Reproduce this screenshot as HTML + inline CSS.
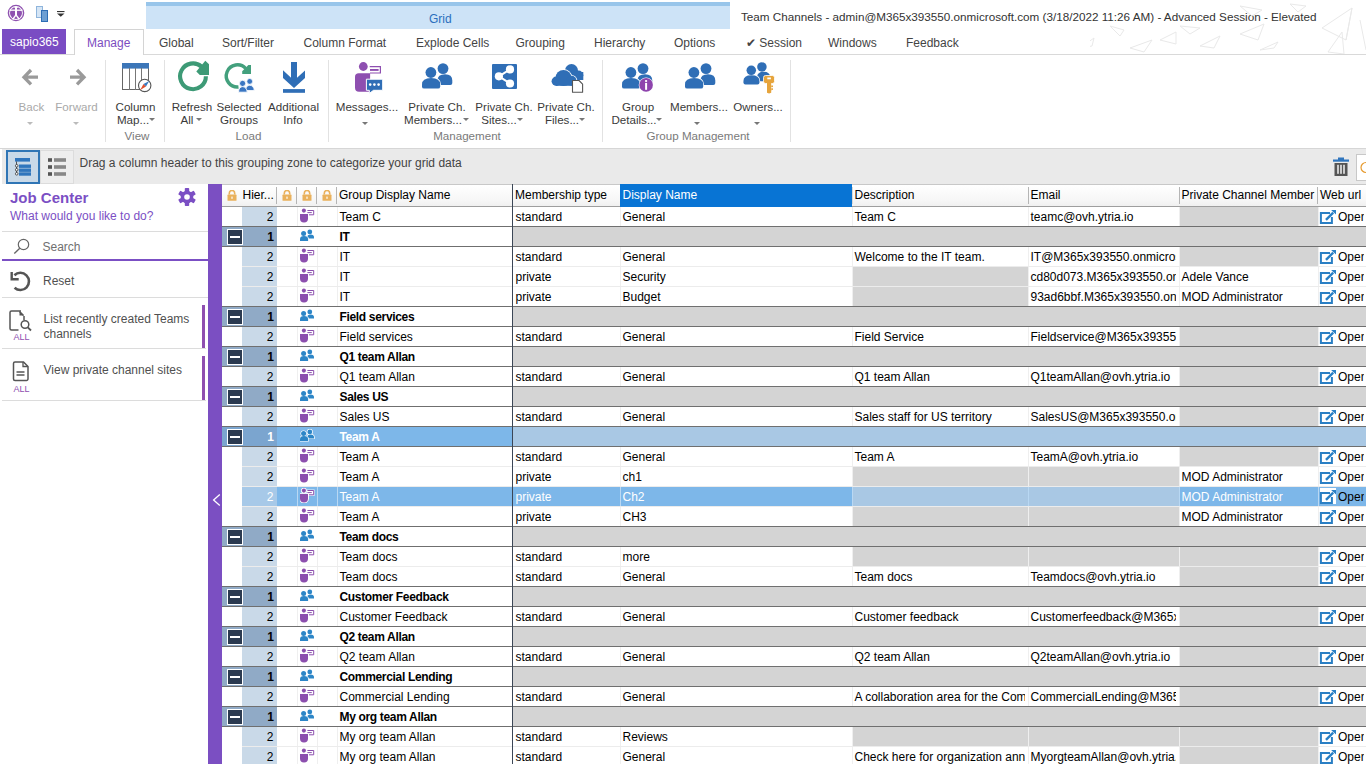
<!DOCTYPE html><html><head><meta charset="utf-8"><style>
*{margin:0;padding:0;box-sizing:border-box}
html,body{width:1366px;height:764px;overflow:hidden;background:#fff;font-family:"Liberation Sans",sans-serif;font-size:12px;color:#222}
.a{position:absolute}
.t{position:absolute;white-space:nowrap;line-height:14px}
.tab{position:absolute;top:36px;white-space:nowrap;color:#444;font-size:12px;line-height:14px}
.rb{position:absolute;white-space:nowrap;color:#3a3a3a;font-size:11.6px;line-height:13px;text-align:center}
.rg{position:absolute;white-space:nowrap;color:#7a7a7a;font-size:11.6px;line-height:13px;text-align:center}
.sep{position:absolute;top:60px;width:1px;height:82px;background:#e2e2e2}
.dd{position:absolute;width:0;height:0;border-left:3px solid transparent;border-right:3px solid transparent;border-top:3px solid #777}
#grid{position:absolute;left:222px;top:184px;width:1144px;height:580px;overflow:hidden}
.row{position:absolute;left:0;width:1144px;height:20px}
.c{position:absolute;top:0;height:20px;line-height:20px;white-space:nowrap;overflow:hidden;padding-left:3px}
</style></head><body><svg width="0" height="0" style="position:absolute">
<defs>
<symbol id="lock" viewBox="0 0 10 11"><path d="M2.3 4.6V3.2a2.7 2.7 0 0 1 5.4 0v1.4" fill="none" stroke="#e9b15c" stroke-width="1.6"/><rect x="0.5" y="4.6" width="9" height="6.2" rx="0.6" fill="#e9b15c"/><rect x="4.4" y="6.6" width="1.2" height="2.2" fill="#fff"/></symbol>
<symbol id="chan" viewBox="0 0 15 15"><circle cx="3.9" cy="2.6" r="2.05" fill="#8c4fae"/><path d="M0 6H8V10.6A4 4 0 0 1 0 10.6Z" fill="#8c4fae"/><path d="M7.4 2.5H13.7V6.8H9M7.4 4.6H11.8" fill="none" stroke="#8c4fae" stroke-width="1"/></symbol>
<symbol id="chansel" viewBox="0 0 15 15"><circle cx="3.9" cy="2.6" r="2.9" fill="#fff"/><path d="M-0.9 5.2H8.9V10.6A4.9 4.9 0 0 1 -0.9 10.6Z" fill="#fff"/><rect x="6.6" y="1.6" width="8" height="6.2" fill="#fff"/><circle cx="3.9" cy="2.6" r="2.05" fill="#8c4fae"/><path d="M0 6H8V10.6A4 4 0 0 1 0 10.6Z" fill="#8c4fae"/><path d="M7.4 2.5H13.7V6.8H9M7.4 4.6H11.8" fill="none" stroke="#8c4fae" stroke-width="1"/></symbol>
<symbol id="team" viewBox="0 0 15 13" overflow="visible"><circle cx="9.8" cy="2.9" r="2.4" fill="#2d86c7"/><path d="M7.2 9.4V8.3Q7.2 5.5 10.6 5.5Q14 5.5 14 8.3V9.4Z" fill="#2d86c7"/><circle cx="3.6" cy="4.6" r="3.1" fill="#fff"/><path d="M-0.7 12.6V10Q-0.7 6.4 4 6.4Q8.8 6.4 8.8 10V12.6Z" fill="#fff"/><circle cx="3.6" cy="4.6" r="2.5" fill="#2d86c7"/><path d="M0 11.9V10.2Q0 7.1 4 7.1Q8.1 7.1 8.1 10.2V11.9Z" fill="#2d86c7"/></symbol>
<symbol id="teamsel" viewBox="0 0 15 13" overflow="visible"><circle cx="9.8" cy="2.9" r="3.1" fill="#fff"/><path d="M6.5 10.1V8.3Q6.5 4.8 10.6 4.8Q14.7 4.8 14.7 8.3V10.1Z" fill="#fff"/><circle cx="9.8" cy="2.9" r="2.4" fill="#2d86c7"/><path d="M7.2 9.4V8.3Q7.2 5.5 10.6 5.5Q14 5.5 14 8.3V9.4Z" fill="#2d86c7"/><circle cx="3.6" cy="4.6" r="3.1" fill="#fff"/><path d="M-0.7 12.6V10Q-0.7 6.4 4 6.4Q8.8 6.4 8.8 10V12.6Z" fill="#fff"/><circle cx="3.6" cy="4.6" r="2.5" fill="#2d86c7"/><path d="M0 11.9V10.2Q0 7.1 4 7.1Q8.1 7.1 8.1 10.2V11.9Z" fill="#2d86c7"/></symbol>
<symbol id="open" viewBox="0 0 17 15"><path d="M11 3.9H1.9V13.9H12.9V8.1" fill="none" stroke="#2a7fc4" stroke-width="2"/><path d="M7 10.8L14.2 3.6" stroke="#2a7fc4" stroke-width="2.4"/><path d="M12.1 1H17V5.6z" fill="#2a7fc4"/></symbol>
</defs></svg>
<svg class="a" style="left:0;top:0" width="1366" height="60">
<circle cx="16" cy="13" r="7.6" fill="none" stroke="#8f52b0" stroke-width="1.4"/>
<circle cx="16" cy="13" r="6" fill="#8f52b0"/>
<path d="M9.5 10.2H22.5" stroke="#fff" stroke-width="1.3"/>
<path d="M16 6.5V15.2" stroke="#fff" stroke-width="2"/>
<path d="M16 14.8L12.6 19.5M16 14.8L19.4 19.5" stroke="#fff" stroke-width="1.4"/>
<path d="M14.3 7L16 8.7 17.7 7" stroke="#fff" stroke-width="1" fill="none"/>
<rect x="36.5" y="6.5" width="6" height="11" fill="#d5e5f5" stroke="#8fb5dc" stroke-width="1"/>
<rect x="41.5" y="10.5" width="6" height="11" fill="#6d9fd3" stroke="#2d6db5" stroke-width="1"/>
<rect x="57" y="11" width="7.5" height="1.1" fill="#333"/>
<path d="M57 13.4h7.5l-3.75 3.4z" fill="#333"/>
</svg>
<div class="a" style="left:146px;top:2px;width:584px;height:27px;background:#cde3f7"></div>
<div class="a" style="left:146px;top:2px;width:584px;height:4px;background:#98c5ea"></div>
<div class="t" style="left:429px;top:12px;color:#2b6fbd;font-size:12px">Grid</div>
<div class="t" style="left:741px;top:10px;color:#333;font-size:11.7px">Team Channels - admin@M365x393550.onmicrosoft.com (3/18/2022 11:26 AM) - Advanced Session - Elevated</div>
<svg class="a" style="left:1090px;top:0" width="276" height="54" fill="none" stroke="#e9e9e9" stroke-width="1">
<path d="M-150 44l14-5-4 9zM-120 38l16-5-6 11z"/>
<path d="M-80 46l18-6-6 12zM-40 42l12-8 4 10zM-10 48l14-10-2 8z"/>
<path d="M40 48l22-8-8 12zM70 40l16-8 0 12zM110 46l20-10-6 12z"/>
<path d="M20 26l14 4-4 6zM90 26l20 2-10 6z"/>
<path d="M150 34l24-10-6 16zM170 50l18-8-4 6z"/>
<path d="M232 28l30-20-6 32zM262 8l-6 32M238 52l14-20 2 22zM270 20l6 30"/>
<path d="M150 6l22 4-10 6zM200 4l16 2-8 6z"/>
</svg>
<div class="a" style="left:2px;top:29px;width:64px;height:25px;background:#7a4cc3"></div>
<div class="t" style="left:10px;top:35px;color:#fff;font-size:12px">sapio365</div>
<div class="a" style="left:0;top:54px;width:1366px;height:1px;background:#d9d9d9"></div>
<div class="a" style="left:74px;top:29px;width:70px;height:26px;background:#fff;border:1px solid #d4d4d4;border-bottom:none"></div>
<div class="t" style="left:87px;top:36px;color:#7c4cc0;font-size:12px">Manage</div>
<div class="tab" style="left:159px">Global</div>
<div class="tab" style="left:222px">Sort/Filter</div>
<div class="tab" style="left:303.5px">Column Format</div>
<div class="tab" style="left:416px">Explode Cells</div>
<div class="tab" style="left:515.5px">Grouping</div>
<div class="tab" style="left:594px">Hierarchy</div>
<div class="tab" style="left:674px">Options</div>
<div class="tab" style="left:746px">&#10004; Session</div>
<div class="tab" style="left:828px">Windows</div>
<div class="tab" style="left:906px">Feedback</div>
<div class="sep" style="left:105px"></div>
<div class="sep" style="left:164px"></div>
<div class="sep" style="left:328px"></div>
<div class="sep" style="left:602px"></div>
<div class="sep" style="left:790px"></div>
<div class="a" style="left:0;top:148px;width:1366px;height:1px;background:#d6d6d6"></div>
<div class="rb gry" style="left:-23.5px;top:100px;width:110px">Back</div>
<style>.gry{color:#a9a9a9 !important}</style>
<div class="rb gry" style="left:21.5px;top:100px;width:110px">Forward</div>
<div class="dd" style="left:27px;top:122px;border-top-color:#bbb"></div>
<div class="dd" style="left:73px;top:122px;border-top-color:#bbb"></div>
<div class="rb" style="left:80.5px;top:100px;width:110px">Column</div>
<div class="rb" style="left:78.0px;top:113px;width:110px">Map...</div>
<div class="dd" style="left:149px;top:118px;border-top-color:#777"></div>
<div class="rg" style="left:82.0px;top:129px;width:110px">View</div>
<div class="rb" style="left:137.0px;top:100px;width:110px">Refresh</div>
<div class="rb" style="left:132.0px;top:113px;width:110px">All</div>
<div class="dd" style="left:196px;top:118px;border-top-color:#777"></div>
<div class="rb" style="left:184.0px;top:100px;width:110px">Selected</div>
<div class="rb" style="left:184.0px;top:113px;width:110px">Groups</div>
<div class="rb" style="left:238.5px;top:100px;width:110px">Additional</div>
<div class="rb" style="left:238.0px;top:113px;width:110px">Info</div>
<div class="rg" style="left:193.5px;top:129px;width:110px">Load</div>
<div class="rb" style="left:312.0px;top:100px;width:110px">Messages...</div>
<div class="dd" style="left:362px;top:122px;border-top-color:#777"></div>
<div class="rb" style="left:382.0px;top:100px;width:110px">Private Ch.</div>
<div class="rb" style="left:378.0px;top:113px;width:110px">Members...</div>
<div class="dd" style="left:463px;top:118px;border-top-color:#777"></div>
<div class="rb" style="left:449.0px;top:100px;width:110px">Private Ch.</div>
<div class="rb" style="left:444.0px;top:113px;width:110px">Sites...</div>
<div class="dd" style="left:517px;top:118px;border-top-color:#777"></div>
<div class="rb" style="left:511.0px;top:100px;width:110px">Private Ch.</div>
<div class="rb" style="left:507.0px;top:113px;width:110px">Files...</div>
<div class="dd" style="left:579px;top:118px;border-top-color:#777"></div>
<div class="rg" style="left:412.0px;top:129px;width:110px">Management</div>
<div class="rb" style="left:583.0px;top:100px;width:110px">Group</div>
<div class="rb" style="left:579.0px;top:113px;width:110px">Details...</div>
<div class="dd" style="left:656px;top:118px;border-top-color:#777"></div>
<div class="rb" style="left:644.0px;top:100px;width:110px">Members...</div>
<div class="dd" style="left:694px;top:122px;border-top-color:#777"></div>
<div class="rb" style="left:703.0px;top:100px;width:110px">Owners...</div>
<div class="dd" style="left:754px;top:122px;border-top-color:#777"></div>
<div class="rg" style="left:628.0px;top:129px;width:140px">Group Management</div>
<svg class="a" style="left:0;top:55px" width="800" height="45" viewBox="0 55 800 45">
<!-- back / forward -->
<path d="M38 77.2H25M31 70L24 77.2l7 7.2" fill="none" stroke="#9a9a9a" stroke-width="3.3"/>
<path d="M70 77.2h13M77 70l7 7.2-7 7.2" fill="none" stroke="#9a9a9a" stroke-width="3.3"/>
<!-- column map -->
<rect x="122.5" y="63.5" width="26" height="26" fill="#fff" stroke="#666" stroke-width="1"/>
<rect x="122" y="63" width="27" height="5.6" fill="#3c76b8"/>
<path d="M129.5 68v22M135.5 68v22M141.5 68v12" stroke="#777" stroke-width="1"/>
<circle cx="144.7" cy="85.4" r="6.2" fill="#fff" stroke="#555" stroke-width="1.1"/>
<path d="M140.2 89.9l3.3-5.8 2.5 2.5z" fill="#e0502e"/><path d="M149.2 80.9l-3.2 5.7-2.5-2.5z" fill="#3b7ac0"/>
<!-- refresh all -->
<path d="M205.9 76.3A12.9 12.9 0 1 1 201.5 66.6" fill="none" stroke="#3d9a76" stroke-width="4.1"/>
<path d="M205.3 60.8L209 64.3V74.9H199.8L196.3 71.5z" fill="#3d9a76"/>
<!-- selected groups -->
<path d="M245.8 68.7A11.1 11.1 0 1 0 238.5 87" fill="none" stroke="#43a07d" stroke-width="3.4"/>
<path d="M248.4 65.1H251V73.9H242.2V71.3z" fill="#43a07d"/>
<circle cx="249.7" cy="81.4" r="2.9" fill="#3a76c2" stroke="#fff" stroke-width="0.8"/>
<path d="M245.5 90.5c0-3.2 1.8-5.2 4.2-5.2s4.5 2 4.5 5.2z" fill="#3a76c2" stroke="#fff" stroke-width="0.8"/>
<circle cx="242.6" cy="83.4" r="3.1" fill="#3a76c2" stroke="#fff" stroke-width="0.9"/>
<path d="M238.5 92.2c0-3.5 1.9-5.6 4.1-5.6s4.6 2.1 4.6 5.6z" fill="#3a76c2" stroke="#fff" stroke-width="0.9"/>
<!-- additional info -->
<rect x="291" y="62" width="6" height="22" fill="#2f6eb6"/>
<path d="M283 70.2L294 80.6L305 70.6V78L294 88L283 78z" fill="#2f6eb6"/>
<rect x="283" y="89.1" width="22" height="3.7" fill="#2f6eb6"/>
<!-- messages -->
<circle cx="363.3" cy="66.5" r="4.4" fill="#8e4fb0"/>
<path d="M355 77Q355 73.3 358.7 73.3H370.1V91.8H359Q355 91.8 355 87.8Z" fill="#8e4fb0"/>
<path d="M369.7 66.7H380.4V73H370" fill="none" stroke="#8e4fb0" stroke-width="1.2"/>
<rect x="370" y="69" width="8.6" height="1.9" fill="#8e4fb0"/>
<path d="M366.4 79.2H382.7V90.3H373.5L369.3 93.5V90.3H366.4Z" fill="#2f6eb6" stroke="#fff" stroke-width="1"/>
<circle cx="370.2" cy="84.6" r="1.3" fill="#fff"/><circle cx="374.4" cy="84.6" r="1.3" fill="#fff"/><circle cx="378.6" cy="84.6" r="1.3" fill="#fff"/>
<!-- private ch members -->
<g id="ppl2">
<circle cx="443" cy="68.6" r="5.4" fill="#2f6eb6"/>
<path d="M437.5 83V80.5Q437.5 74.2 445 74.2Q452.3 74.2 452.3 80.5V83Q452.3 85 450.3 85H439.5Q437.5 85 437.5 83Z" fill="#2f6eb6"/>
<circle cx="430.9" cy="72.5" r="6.2" fill="#fff"/>
<path d="M421.2 86.6V84.6Q421.2 77.3 431.1 77.3Q441 77.3 441 84.6V86.6Q441 89.4 438.2 89.4H424Q421.2 89.4 421.2 86.6Z" fill="#fff"/>
<circle cx="430.9" cy="72.5" r="5.4" fill="#2f6eb6"/>
<path d="M422 86.4V84.6Q422 78.1 431.1 78.1Q440.2 78.1 440.2 84.6V86.4Q440.2 88.6 438 88.6H424.2Q422 88.6 422 86.4Z" fill="#2f6eb6"/>
</g>
<!-- sites -->
<rect x="492" y="64" width="25" height="25" rx="1" fill="#2f6eb6"/>
<path d="M499 76.3l11-6.9M499 76.3l11 7.2" stroke="#fff" stroke-width="2"/>
<circle cx="498.9" cy="76.3" r="4.1" fill="#fff"/><circle cx="510" cy="69.4" r="4.1" fill="#fff"/><circle cx="510" cy="83.5" r="4.1" fill="#fff"/>
<!-- files cloud -->
<g fill="#2f6eb6">
<circle cx="571.5" cy="70.5" r="6.5"/><circle cx="578.5" cy="75.3" r="4.8"/><rect x="566" y="72" width="17.3" height="8"/>
</g>
<g fill="#fff"><circle cx="563.5" cy="78" r="8.9"/><circle cx="556.3" cy="81.3" r="5.6"/><circle cx="571.5" cy="80.8" r="5.9"/></g>
<g fill="#2f6eb6">
<circle cx="563.5" cy="78" r="8"/><circle cx="556.3" cy="81.2" r="4.7"/><circle cx="571.5" cy="80.8" r="5"/><rect x="556" y="80" width="20" height="5.8"/>
</g>
<path d="M572.5 80.5h6.5l3.6 3.6v8.1h-10.1z" fill="#fff" stroke="#555" stroke-width="1.1" stroke-linejoin="round"/>
<!-- group details -->
<use href="#ppl2" transform="translate(200,0)"/>
<circle cx="646.1" cy="84.9" r="7.4" fill="#fff"/><circle cx="646.1" cy="84.9" r="6.8" fill="#8e44ad"/>
<rect x="645.1" y="82.9" width="2" height="6.9" fill="#fff"/><rect x="645.1" y="80.1" width="2" height="1.8" fill="#fff"/>
<!-- members -->
<use href="#ppl2" transform="translate(263,0)"/>
<!-- owners -->
<g transform="translate(743,62) scale(0.88) translate(-421.5,-63)"><use href="#ppl2"/></g>
<rect x="763.5" y="75.5" width="11" height="8" rx="2" fill="#e6a43c" stroke="#fff" stroke-width="0.8"/>
<rect x="767" y="82" width="4.2" height="9" fill="#e6a43c"/>
<path d="M767 92.8l2.1 0.6 2.1-0.6V90h-4.2z" fill="#e6a43c"/>
<rect x="771.2" y="85.5" width="1.8" height="1.6" fill="#e6a43c"/><rect x="771.2" y="88.3" width="1.8" height="1.6" fill="#e6a43c"/>
<rect x="767.3" y="77.5" width="3.6" height="1.8" fill="#fff"/>
</svg>
<div class="a" style="left:2px;top:149px;width:1364px;height:35px;background:#eaeaea"></div>
<div class="a" style="left:6px;top:150px;width:34px;height:34px;background:#c9d9e8;border:2px solid #2f75b5"></div>
<div class="a" style="left:40px;top:150px;width:34px;height:34px;background:#eeeeee;border:1px solid #dcdcdc"></div>
<svg class="a" style="left:0;top:145px" width="80" height="40" viewBox="0 145 80 40">
<rect x="15" y="158" width="15" height="3.6" fill="#2f75bd"/>
<rect x="19" y="164.5" width="12" height="3.4" fill="#2f75bd"/>
<rect x="19" y="168.5" width="12" height="3.4" fill="#2f75bd"/>
<rect x="19" y="172.3" width="12" height="3.4" fill="#2f75bd"/>
<path d="M16.5 161.5v12" stroke="#333" stroke-width="0.8"/>
<circle cx="16.7" cy="165.8" r="1.3" fill="#fff" stroke="#333" stroke-width="0.8"/>
<circle cx="16.7" cy="169.8" r="1.3" fill="#fff" stroke="#333" stroke-width="0.8"/>
<circle cx="16.7" cy="173.8" r="1.3" fill="#fff" stroke="#333" stroke-width="0.8"/>
<rect x="48" y="158.2" width="4" height="3.6" fill="#555"/><rect x="54" y="158.2" width="12" height="3.6" fill="#888"/>
<rect x="48" y="165.2" width="4" height="3.6" fill="#555"/><rect x="54" y="165.2" width="12" height="3.6" fill="#888"/>
<rect x="48" y="172.2" width="4" height="3.6" fill="#555"/><rect x="54" y="172.2" width="12" height="3.6" fill="#888"/>
</svg>
<div class="t" style="left:79.5px;top:156px;color:#444;font-size:12px">Drag a column header to this grouping zone to categorize your grid data</div>
<svg class="a" style="left:1330px;top:150px" width="36" height="34" viewBox="1330 150 36 34">
<rect x="1333" y="159.5" width="16" height="2.2" fill="#2f75bd"/>
<rect x="1338" y="157.5" width="6" height="2.5" fill="#2f75bd"/>
<path d="M1334.5 163h13v13h-13z" fill="#555"/>
<rect x="1337.2" y="164.8" width="1.6" height="9" fill="#eaeaea"/><rect x="1340.2" y="164.8" width="1.6" height="9" fill="#eaeaea"/><rect x="1343.2" y="164.8" width="1.6" height="9" fill="#eaeaea"/>
<rect x="1356.5" y="154.5" width="12" height="26" fill="#fff" stroke="#c8c8c8"/>
<circle cx="1366" cy="167.5" r="5" fill="none" stroke="#e69a2e" stroke-width="1.2"/>
</svg>
<div class="t" style="left:10px;top:189px;color:#7b4fc4;font-size:15px;font-weight:bold;line-height:17px">Job Center</div>
<svg class="a" style="left:177px;top:187px" width="20" height="20" viewBox="0 0 20 20">
<g fill="#7b4fc4" transform="translate(10,10)">
<circle r="6.3"/>
<rect x="-2.2" y="-9" width="4.4" height="18" rx="0.8"/>
<rect x="-2.2" y="-9" width="4.4" height="18" rx="0.8" transform="rotate(60)"/>
<rect x="-2.2" y="-9" width="4.4" height="18" rx="0.8" transform="rotate(120)"/>
</g><circle cx="10" cy="10" r="2.8" fill="#fff"/></svg>
<div class="t" style="left:10px;top:209px;color:#7b4fc4;font-size:12px">What would you like to do?</div>
<div class="a" style="left:2px;top:231px;width:206px;height:1px;background:#dcdcdc"></div>
<svg class="a" style="left:10px;top:236px" width="24" height="20" viewBox="10 236 24 20">
<circle cx="23.5" cy="244.5" r="5.2" fill="none" stroke="#666" stroke-width="1.2"/>
<path d="M19.8 248.3L14.3 253.5" stroke="#666" stroke-width="1.4"/></svg>
<div class="t" style="left:42.5px;top:240px;color:#707070;font-size:12px">Search</div>
<div class="a" style="left:2px;top:259px;width:206px;height:1.5px;background:#7b4fc4"></div>
<svg class="a" style="left:8px;top:268px" width="26" height="26" viewBox="8 268 26 26">
<path d="M14.4 275.2A8.6 8.6 0 1 1 14.6 287.8" fill="none" stroke="#555" stroke-width="2.6"/>
<path d="M11.7 272V279.3H18.7" fill="none" stroke="#555" stroke-width="2.4"/></svg>
<div class="t" style="left:43px;top:273.5px;color:#505050;font-size:12px">Reset</div>
<div class="a" style="left:2px;top:297px;width:206px;height:1px;background:#dcdcdc"></div>
<div class="a" style="left:202px;top:305px;width:3px;height:43px;background:#8e4fb0"></div>
<div class="a" style="left:2px;top:348px;width:204px;height:1px;background:#dcdcdc"></div>
<div class="a" style="left:202px;top:356px;width:3px;height:44px;background:#8e4fb0"></div>
<div class="a" style="left:2px;top:400px;width:204px;height:1px;background:#dcdcdc"></div>
<div class="t" style="left:43.5px;top:312px;color:#505050;font-size:12px;line-height:15px">List recently created Teams<br>channels</div>
<div class="t" style="left:43.5px;top:363px;color:#505050;font-size:12px">View private channel sites</div>
<div class="t" style="left:13.5px;top:332px;color:#8e4fb0;font-size:9px;line-height:11px">ALL</div>
<div class="t" style="left:13.5px;top:384px;color:#8e4fb0;font-size:9px;line-height:11px">ALL</div>
<svg class="a" style="left:0;top:300px" width="40" height="90" viewBox="0 300 40 90">
<path d="M21 311H11.5a1.5 1.5 0 0 0-1.5 1.5v16a1.5 1.5 0 0 0 1.5 1.5h7" fill="none" stroke="#555" stroke-width="1.5"/>
<path d="M19.5 311.5l4 4" stroke="#555" stroke-width="1.5"/><path d="M19.5 311v4.5h4.5z" fill="#555"/>
<path d="M24 316v4" stroke="#555" stroke-width="1.5"/>
<circle cx="25" cy="324.5" r="3.8" fill="none" stroke="#555" stroke-width="1.5"/>
<path d="M27.8 327.3L31 330.5" stroke="#555" stroke-width="1.8"/>
<path d="M23.5 362H15a1.5 1.5 0 0 0-1.5 1.5v15.5a1.5 1.5 0 0 0 1.5 1.5h11.5a1.5 1.5 0 0 0 1.5-1.5V366.5z" fill="none" stroke="#555" stroke-width="1.5"/>
<path d="M23 362v4.5h5" fill="none" stroke="#555" stroke-width="1.3"/>
<path d="M16.5 372h8M16.5 375h8" stroke="#555" stroke-width="1.5"/>
</svg>
<div class="a" style="left:208px;top:184px;width:14px;height:580px;background:#7b4fc2"></div>
<svg class="a" style="left:208px;top:490px" width="14" height="20" viewBox="0 0 14 20"><path d="M11.8 4.5l-6.2 5.5 6.2 5.5" fill="none" stroke="#fff" stroke-width="1.3"/></svg>
<div id="grid">
<div class="a" style="left:0;top:0;width:1144px;height:23px;background:linear-gradient(#ffffff,#f7f7f7 70%,#f0f0f0);border-top:1px solid #c8c8c8;border-bottom:1px solid #9e9e9e"></div>
<div class="a" style="left:54px;top:3px;width:1px;height:17px;background:#b5b5b5"></div>
<div class="a" style="left:74px;top:3px;width:1px;height:17px;background:#b5b5b5"></div>
<div class="a" style="left:94px;top:3px;width:1px;height:17px;background:#b5b5b5"></div>
<div class="a" style="left:114px;top:3px;width:1px;height:17px;background:#b5b5b5"></div>
<div class="a" style="left:806px;top:3px;width:1px;height:17px;background:#b5b5b5"></div>
<div class="a" style="left:957px;top:3px;width:1px;height:17px;background:#b5b5b5"></div>
<div class="a" style="left:1095px;top:3px;width:1px;height:17px;background:#b5b5b5"></div>
<div class="a" style="left:630px;top:3px;width:1px;height:17px;background:#d8d8d8"></div>
<svg class="a" style="left:4.5px;top:5.5px" width="10" height="11"><use href="#lock"/></svg>
<svg class="a" style="left:60px;top:5.5px" width="10" height="11"><use href="#lock"/></svg>
<svg class="a" style="left:80px;top:5.5px" width="10" height="11"><use href="#lock"/></svg>
<svg class="a" style="left:100px;top:5.5px" width="10" height="11"><use href="#lock"/></svg>
<div class="a" style="left:398px;top:0px;width:232px;height:23px;background:#0874d4"></div>
<div class="t" style="left:20.5px;top:4px;color:#000">Hier...</div>
<div class="t" style="left:117px;top:4px;color:#000">Group Display Name</div>
<div class="t" style="left:293px;top:4px;color:#000">Membership type</div>
<div class="t" style="left:400.5px;top:4px;color:#fff">Display Name</div>
<div class="t" style="left:632.5px;top:4px;color:#000">Description</div>
<div class="t" style="left:808.5px;top:4px;color:#000">Email</div>
<div class="t" style="left:959.5px;top:4px;color:#000">Private Channel Member</div>
<div class="t" style="left:1098px;top:4px;color:#000">Web url</div>
<div class="a" style="left:20px;top:23px;width:1124px;height:20px;background:#fff"></div>
<div class="a" style="left:20px;top:23px;width:35px;height:20px;background:#c9d9e8"></div>
<div class="c" style="left:20px;top:23px;width:35px;color:#000;text-align:right;padding-left:0;padding-right:3.5px;">2</div>
<svg class="a" style="left:78px;top:24px;overflow:visible" width="15" height="15"><use href="#chan"/></svg>
<div class="c" style="left:115px;top:23px;width:172px;color:#000;padding-left:2.5px;">Team C</div>
<div class="c" style="left:291px;top:23px;width:104px;color:#000;padding-left:2.5px;">standard</div>
<div class="c" style="left:398px;top:23px;width:229px;color:#000;padding-left:2.5px;">General</div>
<div class="c" style="left:630px;top:23px;width:173px;color:#000;padding-left:2.5px;">Team C</div>
<div class="c" style="left:806px;top:23px;width:148px;color:#000;padding-left:2.5px;">teamc@ovh.ytria.io</div>
<div class="a" style="left:958px;top:23px;width:138px;height:19px;background:#d4d4d4"></div>
<svg class="a" style="left:1097px;top:25px" width="17" height="15"><use href="#open"/></svg>
<div class="c" style="left:1116px;top:23px;width:26px;color:#000;padding-left:0">Open</div>
<div class="a" style="left:20px;top:42px;width:1124px;height:1px;background:#ececec"></div>
<div class="a" style="left:75px;top:23px;width:1px;height:19px;background:#efefef"></div>
<div class="a" style="left:95px;top:23px;width:1px;height:19px;background:#efefef"></div>
<div class="a" style="left:115px;top:23px;width:1px;height:19px;background:#efefef"></div>
<div class="a" style="left:398px;top:23px;width:1px;height:19px;background:#efefef"></div>
<div class="a" style="left:630px;top:23px;width:1px;height:19px;background:#efefef"></div>
<div class="a" style="left:806px;top:23px;width:1px;height:19px;background:#efefef"></div>
<div class="a" style="left:957px;top:23px;width:1px;height:19px;background:#efefef"></div>
<div class="a" style="left:1096px;top:23px;width:1px;height:19px;background:#efefef"></div>
<div class="a" style="left:0;top:43px;width:1144px;height:20px;background:#ffffff"></div>
<div class="a" style="left:291px;top:43px;width:853px;height:20px;background:#d4d4d4"></div>
<div class="a" style="left:0;top:43px;width:55px;height:20px;background:#90aac6"></div>
<div class="a" style="left:5px;top:45px;width:16px;height:16px;background:#2b3a50;border:1px solid #fff"></div>
<div class="a" style="left:8px;top:52px;width:10px;height:2.4px;background:#fff"></div>
<div class="c" style="left:20px;top:43px;width:35px;color:#000;font-weight:bold;letter-spacing:-0.33px;text-align:right;padding-left:0;padding-right:3.5px;">1</div>
<svg class="a" style="left:78px;top:45px" width="15" height="13" style="overflow:visible"><use href="#team"/></svg>
<div class="c" style="left:115px;top:43px;width:172px;color:#000;font-weight:bold;letter-spacing:-0.33px;padding-left:2.5px;">IT</div>
<div class="a" style="left:0;top:42px;width:1144px;height:1px;background:#6f6f6f"></div>
<div class="a" style="left:0;top:62px;width:1144px;height:1px;background:#6f6f6f"></div>
<div class="a" style="left:20px;top:63px;width:1124px;height:20px;background:#fff"></div>
<div class="a" style="left:20px;top:63px;width:35px;height:20px;background:#c9d9e8"></div>
<div class="c" style="left:20px;top:63px;width:35px;color:#000;text-align:right;padding-left:0;padding-right:3.5px;">2</div>
<svg class="a" style="left:78px;top:64px;overflow:visible" width="15" height="15"><use href="#chan"/></svg>
<div class="c" style="left:115px;top:63px;width:172px;color:#000;padding-left:2.5px;">IT</div>
<div class="c" style="left:291px;top:63px;width:104px;color:#000;padding-left:2.5px;">standard</div>
<div class="c" style="left:398px;top:63px;width:229px;color:#000;padding-left:2.5px;">General</div>
<div class="c" style="left:630px;top:63px;width:173px;color:#000;padding-left:2.5px;">Welcome to the IT team.</div>
<div class="c" style="left:806px;top:63px;width:148px;color:#000;padding-left:2.5px;">IT@M365x393550.onmicrosoft.com</div>
<div class="a" style="left:958px;top:63px;width:138px;height:19px;background:#d4d4d4"></div>
<svg class="a" style="left:1097px;top:65px" width="17" height="15"><use href="#open"/></svg>
<div class="c" style="left:1116px;top:63px;width:26px;color:#000;padding-left:0">Open</div>
<div class="a" style="left:20px;top:82px;width:1124px;height:1px;background:#ececec"></div>
<div class="a" style="left:75px;top:63px;width:1px;height:19px;background:#efefef"></div>
<div class="a" style="left:95px;top:63px;width:1px;height:19px;background:#efefef"></div>
<div class="a" style="left:115px;top:63px;width:1px;height:19px;background:#efefef"></div>
<div class="a" style="left:398px;top:63px;width:1px;height:19px;background:#efefef"></div>
<div class="a" style="left:630px;top:63px;width:1px;height:19px;background:#efefef"></div>
<div class="a" style="left:806px;top:63px;width:1px;height:19px;background:#efefef"></div>
<div class="a" style="left:957px;top:63px;width:1px;height:19px;background:#efefef"></div>
<div class="a" style="left:1096px;top:63px;width:1px;height:19px;background:#efefef"></div>
<div class="a" style="left:20px;top:83px;width:1124px;height:20px;background:#fff"></div>
<div class="a" style="left:20px;top:83px;width:35px;height:20px;background:#c9d9e8"></div>
<div class="c" style="left:20px;top:83px;width:35px;color:#000;text-align:right;padding-left:0;padding-right:3.5px;">2</div>
<svg class="a" style="left:78px;top:84px;overflow:visible" width="15" height="15"><use href="#chan"/></svg>
<div class="c" style="left:115px;top:83px;width:172px;color:#000;padding-left:2.5px;">IT</div>
<div class="c" style="left:291px;top:83px;width:104px;color:#000;padding-left:2.5px;">private</div>
<div class="c" style="left:398px;top:83px;width:229px;color:#000;padding-left:2.5px;">Security</div>
<div class="a" style="left:631px;top:83px;width:175px;height:19px;background:#d4d4d4"></div>
<div class="c" style="left:806px;top:83px;width:148px;color:#000;padding-left:2.5px;">cd80d073.M365x393550.onmicrosoft.com</div>
<div class="c" style="left:957px;top:83px;width:136px;color:#000;padding-left:2.5px;">Adele Vance</div>
<svg class="a" style="left:1097px;top:85px" width="17" height="15"><use href="#open"/></svg>
<div class="c" style="left:1116px;top:83px;width:26px;color:#000;padding-left:0">Open</div>
<div class="a" style="left:20px;top:102px;width:1124px;height:1px;background:#ececec"></div>
<div class="a" style="left:75px;top:83px;width:1px;height:19px;background:#efefef"></div>
<div class="a" style="left:95px;top:83px;width:1px;height:19px;background:#efefef"></div>
<div class="a" style="left:115px;top:83px;width:1px;height:19px;background:#efefef"></div>
<div class="a" style="left:398px;top:83px;width:1px;height:19px;background:#efefef"></div>
<div class="a" style="left:630px;top:83px;width:1px;height:19px;background:#efefef"></div>
<div class="a" style="left:806px;top:83px;width:1px;height:19px;background:#efefef"></div>
<div class="a" style="left:957px;top:83px;width:1px;height:19px;background:#efefef"></div>
<div class="a" style="left:1096px;top:83px;width:1px;height:19px;background:#efefef"></div>
<div class="a" style="left:20px;top:103px;width:1124px;height:20px;background:#fff"></div>
<div class="a" style="left:20px;top:103px;width:35px;height:20px;background:#c9d9e8"></div>
<div class="c" style="left:20px;top:103px;width:35px;color:#000;text-align:right;padding-left:0;padding-right:3.5px;">2</div>
<svg class="a" style="left:78px;top:104px;overflow:visible" width="15" height="15"><use href="#chan"/></svg>
<div class="c" style="left:115px;top:103px;width:172px;color:#000;padding-left:2.5px;">IT</div>
<div class="c" style="left:291px;top:103px;width:104px;color:#000;padding-left:2.5px;">private</div>
<div class="c" style="left:398px;top:103px;width:229px;color:#000;padding-left:2.5px;">Budget</div>
<div class="a" style="left:631px;top:103px;width:175px;height:19px;background:#d4d4d4"></div>
<div class="c" style="left:806px;top:103px;width:148px;color:#000;padding-left:2.5px;">93ad6bbf.M365x393550.onmicrosoft.com</div>
<div class="c" style="left:957px;top:103px;width:136px;color:#000;padding-left:2.5px;">MOD Administrator</div>
<svg class="a" style="left:1097px;top:105px" width="17" height="15"><use href="#open"/></svg>
<div class="c" style="left:1116px;top:103px;width:26px;color:#000;padding-left:0">Open</div>
<div class="a" style="left:20px;top:122px;width:1124px;height:1px;background:#ececec"></div>
<div class="a" style="left:75px;top:103px;width:1px;height:19px;background:#efefef"></div>
<div class="a" style="left:95px;top:103px;width:1px;height:19px;background:#efefef"></div>
<div class="a" style="left:115px;top:103px;width:1px;height:19px;background:#efefef"></div>
<div class="a" style="left:398px;top:103px;width:1px;height:19px;background:#efefef"></div>
<div class="a" style="left:630px;top:103px;width:1px;height:19px;background:#efefef"></div>
<div class="a" style="left:806px;top:103px;width:1px;height:19px;background:#efefef"></div>
<div class="a" style="left:957px;top:103px;width:1px;height:19px;background:#efefef"></div>
<div class="a" style="left:1096px;top:103px;width:1px;height:19px;background:#efefef"></div>
<div class="a" style="left:0;top:123px;width:1144px;height:20px;background:#ffffff"></div>
<div class="a" style="left:291px;top:123px;width:853px;height:20px;background:#d4d4d4"></div>
<div class="a" style="left:0;top:123px;width:55px;height:20px;background:#90aac6"></div>
<div class="a" style="left:5px;top:125px;width:16px;height:16px;background:#2b3a50;border:1px solid #fff"></div>
<div class="a" style="left:8px;top:132px;width:10px;height:2.4px;background:#fff"></div>
<div class="c" style="left:20px;top:123px;width:35px;color:#000;font-weight:bold;letter-spacing:-0.33px;text-align:right;padding-left:0;padding-right:3.5px;">1</div>
<svg class="a" style="left:78px;top:125px" width="15" height="13" style="overflow:visible"><use href="#team"/></svg>
<div class="c" style="left:115px;top:123px;width:172px;color:#000;font-weight:bold;letter-spacing:-0.33px;padding-left:2.5px;">Field services</div>
<div class="a" style="left:0;top:122px;width:1144px;height:1px;background:#6f6f6f"></div>
<div class="a" style="left:0;top:142px;width:1144px;height:1px;background:#6f6f6f"></div>
<div class="a" style="left:20px;top:143px;width:1124px;height:20px;background:#fff"></div>
<div class="a" style="left:20px;top:143px;width:35px;height:20px;background:#c9d9e8"></div>
<div class="c" style="left:20px;top:143px;width:35px;color:#000;text-align:right;padding-left:0;padding-right:3.5px;">2</div>
<svg class="a" style="left:78px;top:144px;overflow:visible" width="15" height="15"><use href="#chan"/></svg>
<div class="c" style="left:115px;top:143px;width:172px;color:#000;padding-left:2.5px;">Field services</div>
<div class="c" style="left:291px;top:143px;width:104px;color:#000;padding-left:2.5px;">standard</div>
<div class="c" style="left:398px;top:143px;width:229px;color:#000;padding-left:2.5px;">General</div>
<div class="c" style="left:630px;top:143px;width:173px;color:#000;padding-left:2.5px;">Field Service</div>
<div class="c" style="left:806px;top:143px;width:148px;color:#000;padding-left:2.5px;">Fieldservice@M365x393550.onmicrosoft.com</div>
<div class="a" style="left:958px;top:143px;width:138px;height:19px;background:#d4d4d4"></div>
<svg class="a" style="left:1097px;top:145px" width="17" height="15"><use href="#open"/></svg>
<div class="c" style="left:1116px;top:143px;width:26px;color:#000;padding-left:0">Open</div>
<div class="a" style="left:20px;top:162px;width:1124px;height:1px;background:#ececec"></div>
<div class="a" style="left:75px;top:143px;width:1px;height:19px;background:#efefef"></div>
<div class="a" style="left:95px;top:143px;width:1px;height:19px;background:#efefef"></div>
<div class="a" style="left:115px;top:143px;width:1px;height:19px;background:#efefef"></div>
<div class="a" style="left:398px;top:143px;width:1px;height:19px;background:#efefef"></div>
<div class="a" style="left:630px;top:143px;width:1px;height:19px;background:#efefef"></div>
<div class="a" style="left:806px;top:143px;width:1px;height:19px;background:#efefef"></div>
<div class="a" style="left:957px;top:143px;width:1px;height:19px;background:#efefef"></div>
<div class="a" style="left:1096px;top:143px;width:1px;height:19px;background:#efefef"></div>
<div class="a" style="left:0;top:163px;width:1144px;height:20px;background:#ffffff"></div>
<div class="a" style="left:291px;top:163px;width:853px;height:20px;background:#d4d4d4"></div>
<div class="a" style="left:0;top:163px;width:55px;height:20px;background:#90aac6"></div>
<div class="a" style="left:5px;top:165px;width:16px;height:16px;background:#2b3a50;border:1px solid #fff"></div>
<div class="a" style="left:8px;top:172px;width:10px;height:2.4px;background:#fff"></div>
<div class="c" style="left:20px;top:163px;width:35px;color:#000;font-weight:bold;letter-spacing:-0.33px;text-align:right;padding-left:0;padding-right:3.5px;">1</div>
<svg class="a" style="left:78px;top:165px" width="15" height="13" style="overflow:visible"><use href="#team"/></svg>
<div class="c" style="left:115px;top:163px;width:172px;color:#000;font-weight:bold;letter-spacing:-0.33px;padding-left:2.5px;">Q1 team Allan</div>
<div class="a" style="left:0;top:162px;width:1144px;height:1px;background:#6f6f6f"></div>
<div class="a" style="left:0;top:182px;width:1144px;height:1px;background:#6f6f6f"></div>
<div class="a" style="left:20px;top:183px;width:1124px;height:20px;background:#fff"></div>
<div class="a" style="left:20px;top:183px;width:35px;height:20px;background:#c9d9e8"></div>
<div class="c" style="left:20px;top:183px;width:35px;color:#000;text-align:right;padding-left:0;padding-right:3.5px;">2</div>
<svg class="a" style="left:78px;top:184px;overflow:visible" width="15" height="15"><use href="#chan"/></svg>
<div class="c" style="left:115px;top:183px;width:172px;color:#000;padding-left:2.5px;">Q1 team Allan</div>
<div class="c" style="left:291px;top:183px;width:104px;color:#000;padding-left:2.5px;">standard</div>
<div class="c" style="left:398px;top:183px;width:229px;color:#000;padding-left:2.5px;">General</div>
<div class="c" style="left:630px;top:183px;width:173px;color:#000;padding-left:2.5px;">Q1 team Allan</div>
<div class="c" style="left:806px;top:183px;width:148px;color:#000;padding-left:2.5px;">Q1teamAllan@ovh.ytria.io</div>
<div class="a" style="left:958px;top:183px;width:138px;height:19px;background:#d4d4d4"></div>
<svg class="a" style="left:1097px;top:185px" width="17" height="15"><use href="#open"/></svg>
<div class="c" style="left:1116px;top:183px;width:26px;color:#000;padding-left:0">Open</div>
<div class="a" style="left:20px;top:202px;width:1124px;height:1px;background:#ececec"></div>
<div class="a" style="left:75px;top:183px;width:1px;height:19px;background:#efefef"></div>
<div class="a" style="left:95px;top:183px;width:1px;height:19px;background:#efefef"></div>
<div class="a" style="left:115px;top:183px;width:1px;height:19px;background:#efefef"></div>
<div class="a" style="left:398px;top:183px;width:1px;height:19px;background:#efefef"></div>
<div class="a" style="left:630px;top:183px;width:1px;height:19px;background:#efefef"></div>
<div class="a" style="left:806px;top:183px;width:1px;height:19px;background:#efefef"></div>
<div class="a" style="left:957px;top:183px;width:1px;height:19px;background:#efefef"></div>
<div class="a" style="left:1096px;top:183px;width:1px;height:19px;background:#efefef"></div>
<div class="a" style="left:0;top:203px;width:1144px;height:20px;background:#ffffff"></div>
<div class="a" style="left:291px;top:203px;width:853px;height:20px;background:#d4d4d4"></div>
<div class="a" style="left:0;top:203px;width:55px;height:20px;background:#90aac6"></div>
<div class="a" style="left:5px;top:205px;width:16px;height:16px;background:#2b3a50;border:1px solid #fff"></div>
<div class="a" style="left:8px;top:212px;width:10px;height:2.4px;background:#fff"></div>
<div class="c" style="left:20px;top:203px;width:35px;color:#000;font-weight:bold;letter-spacing:-0.33px;text-align:right;padding-left:0;padding-right:3.5px;">1</div>
<svg class="a" style="left:78px;top:205px" width="15" height="13" style="overflow:visible"><use href="#team"/></svg>
<div class="c" style="left:115px;top:203px;width:172px;color:#000;font-weight:bold;letter-spacing:-0.33px;padding-left:2.5px;">Sales US</div>
<div class="a" style="left:0;top:202px;width:1144px;height:1px;background:#6f6f6f"></div>
<div class="a" style="left:0;top:222px;width:1144px;height:1px;background:#6f6f6f"></div>
<div class="a" style="left:20px;top:223px;width:1124px;height:20px;background:#fff"></div>
<div class="a" style="left:20px;top:223px;width:35px;height:20px;background:#c9d9e8"></div>
<div class="c" style="left:20px;top:223px;width:35px;color:#000;text-align:right;padding-left:0;padding-right:3.5px;">2</div>
<svg class="a" style="left:78px;top:224px;overflow:visible" width="15" height="15"><use href="#chan"/></svg>
<div class="c" style="left:115px;top:223px;width:172px;color:#000;padding-left:2.5px;">Sales US</div>
<div class="c" style="left:291px;top:223px;width:104px;color:#000;padding-left:2.5px;">standard</div>
<div class="c" style="left:398px;top:223px;width:229px;color:#000;padding-left:2.5px;">General</div>
<div class="c" style="left:630px;top:223px;width:173px;color:#000;padding-left:2.5px;">Sales staff for US territory</div>
<div class="c" style="left:806px;top:223px;width:148px;color:#000;padding-left:2.5px;">SalesUS@M365x393550.onmicrosoft.com</div>
<div class="a" style="left:958px;top:223px;width:138px;height:19px;background:#d4d4d4"></div>
<svg class="a" style="left:1097px;top:225px" width="17" height="15"><use href="#open"/></svg>
<div class="c" style="left:1116px;top:223px;width:26px;color:#000;padding-left:0">Open</div>
<div class="a" style="left:20px;top:242px;width:1124px;height:1px;background:#ececec"></div>
<div class="a" style="left:75px;top:223px;width:1px;height:19px;background:#efefef"></div>
<div class="a" style="left:95px;top:223px;width:1px;height:19px;background:#efefef"></div>
<div class="a" style="left:115px;top:223px;width:1px;height:19px;background:#efefef"></div>
<div class="a" style="left:398px;top:223px;width:1px;height:19px;background:#efefef"></div>
<div class="a" style="left:630px;top:223px;width:1px;height:19px;background:#efefef"></div>
<div class="a" style="left:806px;top:223px;width:1px;height:19px;background:#efefef"></div>
<div class="a" style="left:957px;top:223px;width:1px;height:19px;background:#efefef"></div>
<div class="a" style="left:1096px;top:223px;width:1px;height:19px;background:#efefef"></div>
<div class="a" style="left:0;top:243px;width:1144px;height:20px;background:#7db7e9"></div>
<div class="a" style="left:291px;top:243px;width:853px;height:20px;background:#a9c8e4"></div>
<div class="a" style="left:0;top:243px;width:55px;height:20px;background:#7ba5cf"></div>
<div class="a" style="left:5px;top:245px;width:16px;height:16px;background:#2b3a50;border:1px solid #fff"></div>
<div class="a" style="left:8px;top:252px;width:10px;height:2.4px;background:#fff"></div>
<div class="c" style="left:20px;top:243px;width:35px;color:#fff;font-weight:bold;letter-spacing:-0.33px;text-align:right;padding-left:0;padding-right:3.5px;">1</div>
<svg class="a" style="left:78px;top:245px" width="15" height="13" style="overflow:visible"><use href="#teamsel"/></svg>
<div class="c" style="left:115px;top:243px;width:172px;color:#fff;font-weight:bold;letter-spacing:-0.33px;padding-left:2.5px;">Team A</div>
<div class="a" style="left:0;top:242px;width:1144px;height:1px;background:#6f6f6f"></div>
<div class="a" style="left:0;top:262px;width:1144px;height:1px;background:#6f6f6f"></div>
<div class="a" style="left:20px;top:263px;width:1124px;height:20px;background:#fff"></div>
<div class="a" style="left:20px;top:263px;width:35px;height:20px;background:#c9d9e8"></div>
<div class="c" style="left:20px;top:263px;width:35px;color:#000;text-align:right;padding-left:0;padding-right:3.5px;">2</div>
<svg class="a" style="left:78px;top:264px;overflow:visible" width="15" height="15"><use href="#chan"/></svg>
<div class="c" style="left:115px;top:263px;width:172px;color:#000;padding-left:2.5px;">Team A</div>
<div class="c" style="left:291px;top:263px;width:104px;color:#000;padding-left:2.5px;">standard</div>
<div class="c" style="left:398px;top:263px;width:229px;color:#000;padding-left:2.5px;">General</div>
<div class="c" style="left:630px;top:263px;width:173px;color:#000;padding-left:2.5px;">Team A</div>
<div class="c" style="left:806px;top:263px;width:148px;color:#000;padding-left:2.5px;">TeamA@ovh.ytria.io</div>
<div class="a" style="left:958px;top:263px;width:138px;height:19px;background:#d4d4d4"></div>
<svg class="a" style="left:1097px;top:265px" width="17" height="15"><use href="#open"/></svg>
<div class="c" style="left:1116px;top:263px;width:26px;color:#000;padding-left:0">Open</div>
<div class="a" style="left:20px;top:282px;width:1124px;height:1px;background:#ececec"></div>
<div class="a" style="left:75px;top:263px;width:1px;height:19px;background:#efefef"></div>
<div class="a" style="left:95px;top:263px;width:1px;height:19px;background:#efefef"></div>
<div class="a" style="left:115px;top:263px;width:1px;height:19px;background:#efefef"></div>
<div class="a" style="left:398px;top:263px;width:1px;height:19px;background:#efefef"></div>
<div class="a" style="left:630px;top:263px;width:1px;height:19px;background:#efefef"></div>
<div class="a" style="left:806px;top:263px;width:1px;height:19px;background:#efefef"></div>
<div class="a" style="left:957px;top:263px;width:1px;height:19px;background:#efefef"></div>
<div class="a" style="left:1096px;top:263px;width:1px;height:19px;background:#efefef"></div>
<div class="a" style="left:20px;top:283px;width:1124px;height:20px;background:#fff"></div>
<div class="a" style="left:20px;top:283px;width:35px;height:20px;background:#c9d9e8"></div>
<div class="c" style="left:20px;top:283px;width:35px;color:#000;text-align:right;padding-left:0;padding-right:3.5px;">2</div>
<svg class="a" style="left:78px;top:284px;overflow:visible" width="15" height="15"><use href="#chan"/></svg>
<div class="c" style="left:115px;top:283px;width:172px;color:#000;padding-left:2.5px;">Team A</div>
<div class="c" style="left:291px;top:283px;width:104px;color:#000;padding-left:2.5px;">private</div>
<div class="c" style="left:398px;top:283px;width:229px;color:#000;padding-left:2.5px;">ch1</div>
<div class="a" style="left:631px;top:283px;width:175px;height:19px;background:#d4d4d4"></div>
<div class="a" style="left:807px;top:283px;width:150px;height:19px;background:#d4d4d4"></div>
<div class="c" style="left:957px;top:283px;width:136px;color:#000;padding-left:2.5px;">MOD Administrator</div>
<svg class="a" style="left:1097px;top:285px" width="17" height="15"><use href="#open"/></svg>
<div class="c" style="left:1116px;top:283px;width:26px;color:#000;padding-left:0">Open</div>
<div class="a" style="left:20px;top:302px;width:1124px;height:1px;background:#ececec"></div>
<div class="a" style="left:75px;top:283px;width:1px;height:19px;background:#efefef"></div>
<div class="a" style="left:95px;top:283px;width:1px;height:19px;background:#efefef"></div>
<div class="a" style="left:115px;top:283px;width:1px;height:19px;background:#efefef"></div>
<div class="a" style="left:398px;top:283px;width:1px;height:19px;background:#efefef"></div>
<div class="a" style="left:630px;top:283px;width:1px;height:19px;background:#efefef"></div>
<div class="a" style="left:806px;top:283px;width:1px;height:19px;background:#efefef"></div>
<div class="a" style="left:957px;top:283px;width:1px;height:19px;background:#efefef"></div>
<div class="a" style="left:1096px;top:283px;width:1px;height:19px;background:#efefef"></div>
<div class="a" style="left:20px;top:303px;width:1124px;height:20px;background:#7db7e9"></div>
<div class="a" style="left:20px;top:303px;width:35px;height:20px;background:#a7c9e8"></div>
<div class="c" style="left:20px;top:303px;width:35px;color:#fff;text-align:right;padding-left:0;padding-right:3.5px;">2</div>
<svg class="a" style="left:78px;top:304px;overflow:visible" width="15" height="15"><use href="#chansel"/></svg>
<div class="c" style="left:115px;top:303px;width:172px;color:#fff;padding-left:2.5px;">Team A</div>
<div class="c" style="left:291px;top:303px;width:104px;color:#fff;padding-left:2.5px;">private</div>
<div class="c" style="left:398px;top:303px;width:229px;color:#fff;padding-left:2.5px;">Ch2</div>
<div class="a" style="left:631px;top:303px;width:175px;height:19px;background:#a9c8e4"></div>
<div class="a" style="left:807px;top:303px;width:150px;height:19px;background:#a9c8e4"></div>
<div class="c" style="left:957px;top:303px;width:136px;color:#fff;padding-left:2.5px;">MOD Administrator</div>
<div class="a" style="left:1098px;top:304px;width:16px;height:16px;background:#fff"></div>
<svg class="a" style="left:1097px;top:305px" width="17" height="15"><use href="#open"/></svg>
<div class="c" style="left:1116px;top:303px;width:26px;color:#000;padding-left:0">Open</div>
<div class="a" style="left:20px;top:322px;width:1124px;height:1px;background:#ececec"></div>
<div class="a" style="left:75px;top:303px;width:1px;height:19px;background:#b9d8f3"></div>
<div class="a" style="left:95px;top:303px;width:1px;height:19px;background:#b9d8f3"></div>
<div class="a" style="left:115px;top:303px;width:1px;height:19px;background:#b9d8f3"></div>
<div class="a" style="left:398px;top:303px;width:1px;height:19px;background:#b9d8f3"></div>
<div class="a" style="left:630px;top:303px;width:1px;height:19px;background:#b9d8f3"></div>
<div class="a" style="left:806px;top:303px;width:1px;height:19px;background:#b9d8f3"></div>
<div class="a" style="left:957px;top:303px;width:1px;height:19px;background:#b9d8f3"></div>
<div class="a" style="left:1096px;top:303px;width:1px;height:19px;background:#b9d8f3"></div>
<div class="a" style="left:20px;top:323px;width:1124px;height:20px;background:#fff"></div>
<div class="a" style="left:20px;top:323px;width:35px;height:20px;background:#c9d9e8"></div>
<div class="c" style="left:20px;top:323px;width:35px;color:#000;text-align:right;padding-left:0;padding-right:3.5px;">2</div>
<svg class="a" style="left:78px;top:324px;overflow:visible" width="15" height="15"><use href="#chan"/></svg>
<div class="c" style="left:115px;top:323px;width:172px;color:#000;padding-left:2.5px;">Team A</div>
<div class="c" style="left:291px;top:323px;width:104px;color:#000;padding-left:2.5px;">private</div>
<div class="c" style="left:398px;top:323px;width:229px;color:#000;padding-left:2.5px;">CH3</div>
<div class="a" style="left:631px;top:323px;width:175px;height:19px;background:#d4d4d4"></div>
<div class="a" style="left:807px;top:323px;width:150px;height:19px;background:#d4d4d4"></div>
<div class="c" style="left:957px;top:323px;width:136px;color:#000;padding-left:2.5px;">MOD Administrator</div>
<svg class="a" style="left:1097px;top:325px" width="17" height="15"><use href="#open"/></svg>
<div class="c" style="left:1116px;top:323px;width:26px;color:#000;padding-left:0">Open</div>
<div class="a" style="left:20px;top:342px;width:1124px;height:1px;background:#ececec"></div>
<div class="a" style="left:75px;top:323px;width:1px;height:19px;background:#efefef"></div>
<div class="a" style="left:95px;top:323px;width:1px;height:19px;background:#efefef"></div>
<div class="a" style="left:115px;top:323px;width:1px;height:19px;background:#efefef"></div>
<div class="a" style="left:398px;top:323px;width:1px;height:19px;background:#efefef"></div>
<div class="a" style="left:630px;top:323px;width:1px;height:19px;background:#efefef"></div>
<div class="a" style="left:806px;top:323px;width:1px;height:19px;background:#efefef"></div>
<div class="a" style="left:957px;top:323px;width:1px;height:19px;background:#efefef"></div>
<div class="a" style="left:1096px;top:323px;width:1px;height:19px;background:#efefef"></div>
<div class="a" style="left:0;top:343px;width:1144px;height:20px;background:#ffffff"></div>
<div class="a" style="left:291px;top:343px;width:853px;height:20px;background:#d4d4d4"></div>
<div class="a" style="left:0;top:343px;width:55px;height:20px;background:#90aac6"></div>
<div class="a" style="left:5px;top:345px;width:16px;height:16px;background:#2b3a50;border:1px solid #fff"></div>
<div class="a" style="left:8px;top:352px;width:10px;height:2.4px;background:#fff"></div>
<div class="c" style="left:20px;top:343px;width:35px;color:#000;font-weight:bold;letter-spacing:-0.33px;text-align:right;padding-left:0;padding-right:3.5px;">1</div>
<svg class="a" style="left:78px;top:345px" width="15" height="13" style="overflow:visible"><use href="#team"/></svg>
<div class="c" style="left:115px;top:343px;width:172px;color:#000;font-weight:bold;letter-spacing:-0.33px;padding-left:2.5px;">Team docs</div>
<div class="a" style="left:0;top:342px;width:1144px;height:1px;background:#6f6f6f"></div>
<div class="a" style="left:0;top:362px;width:1144px;height:1px;background:#6f6f6f"></div>
<div class="a" style="left:20px;top:363px;width:1124px;height:20px;background:#fff"></div>
<div class="a" style="left:20px;top:363px;width:35px;height:20px;background:#c9d9e8"></div>
<div class="c" style="left:20px;top:363px;width:35px;color:#000;text-align:right;padding-left:0;padding-right:3.5px;">2</div>
<svg class="a" style="left:78px;top:364px;overflow:visible" width="15" height="15"><use href="#chan"/></svg>
<div class="c" style="left:115px;top:363px;width:172px;color:#000;padding-left:2.5px;">Team docs</div>
<div class="c" style="left:291px;top:363px;width:104px;color:#000;padding-left:2.5px;">standard</div>
<div class="c" style="left:398px;top:363px;width:229px;color:#000;padding-left:2.5px;">more</div>
<div class="a" style="left:631px;top:363px;width:175px;height:19px;background:#d4d4d4"></div>
<div class="a" style="left:807px;top:363px;width:150px;height:19px;background:#d4d4d4"></div>
<div class="a" style="left:958px;top:363px;width:138px;height:19px;background:#d4d4d4"></div>
<svg class="a" style="left:1097px;top:365px" width="17" height="15"><use href="#open"/></svg>
<div class="c" style="left:1116px;top:363px;width:26px;color:#000;padding-left:0">Open</div>
<div class="a" style="left:20px;top:382px;width:1124px;height:1px;background:#ececec"></div>
<div class="a" style="left:75px;top:363px;width:1px;height:19px;background:#efefef"></div>
<div class="a" style="left:95px;top:363px;width:1px;height:19px;background:#efefef"></div>
<div class="a" style="left:115px;top:363px;width:1px;height:19px;background:#efefef"></div>
<div class="a" style="left:398px;top:363px;width:1px;height:19px;background:#efefef"></div>
<div class="a" style="left:630px;top:363px;width:1px;height:19px;background:#efefef"></div>
<div class="a" style="left:806px;top:363px;width:1px;height:19px;background:#efefef"></div>
<div class="a" style="left:957px;top:363px;width:1px;height:19px;background:#efefef"></div>
<div class="a" style="left:1096px;top:363px;width:1px;height:19px;background:#efefef"></div>
<div class="a" style="left:20px;top:383px;width:1124px;height:20px;background:#fff"></div>
<div class="a" style="left:20px;top:383px;width:35px;height:20px;background:#c9d9e8"></div>
<div class="c" style="left:20px;top:383px;width:35px;color:#000;text-align:right;padding-left:0;padding-right:3.5px;">2</div>
<svg class="a" style="left:78px;top:384px;overflow:visible" width="15" height="15"><use href="#chan"/></svg>
<div class="c" style="left:115px;top:383px;width:172px;color:#000;padding-left:2.5px;">Team docs</div>
<div class="c" style="left:291px;top:383px;width:104px;color:#000;padding-left:2.5px;">standard</div>
<div class="c" style="left:398px;top:383px;width:229px;color:#000;padding-left:2.5px;">General</div>
<div class="c" style="left:630px;top:383px;width:173px;color:#000;padding-left:2.5px;">Team docs</div>
<div class="c" style="left:806px;top:383px;width:148px;color:#000;padding-left:2.5px;">Teamdocs@ovh.ytria.io</div>
<div class="a" style="left:958px;top:383px;width:138px;height:19px;background:#d4d4d4"></div>
<svg class="a" style="left:1097px;top:385px" width="17" height="15"><use href="#open"/></svg>
<div class="c" style="left:1116px;top:383px;width:26px;color:#000;padding-left:0">Open</div>
<div class="a" style="left:20px;top:402px;width:1124px;height:1px;background:#ececec"></div>
<div class="a" style="left:75px;top:383px;width:1px;height:19px;background:#efefef"></div>
<div class="a" style="left:95px;top:383px;width:1px;height:19px;background:#efefef"></div>
<div class="a" style="left:115px;top:383px;width:1px;height:19px;background:#efefef"></div>
<div class="a" style="left:398px;top:383px;width:1px;height:19px;background:#efefef"></div>
<div class="a" style="left:630px;top:383px;width:1px;height:19px;background:#efefef"></div>
<div class="a" style="left:806px;top:383px;width:1px;height:19px;background:#efefef"></div>
<div class="a" style="left:957px;top:383px;width:1px;height:19px;background:#efefef"></div>
<div class="a" style="left:1096px;top:383px;width:1px;height:19px;background:#efefef"></div>
<div class="a" style="left:0;top:403px;width:1144px;height:20px;background:#ffffff"></div>
<div class="a" style="left:291px;top:403px;width:853px;height:20px;background:#d4d4d4"></div>
<div class="a" style="left:0;top:403px;width:55px;height:20px;background:#90aac6"></div>
<div class="a" style="left:5px;top:405px;width:16px;height:16px;background:#2b3a50;border:1px solid #fff"></div>
<div class="a" style="left:8px;top:412px;width:10px;height:2.4px;background:#fff"></div>
<div class="c" style="left:20px;top:403px;width:35px;color:#000;font-weight:bold;letter-spacing:-0.33px;text-align:right;padding-left:0;padding-right:3.5px;">1</div>
<svg class="a" style="left:78px;top:405px" width="15" height="13" style="overflow:visible"><use href="#team"/></svg>
<div class="c" style="left:115px;top:403px;width:172px;color:#000;font-weight:bold;letter-spacing:-0.33px;padding-left:2.5px;">Customer Feedback</div>
<div class="a" style="left:0;top:402px;width:1144px;height:1px;background:#6f6f6f"></div>
<div class="a" style="left:0;top:422px;width:1144px;height:1px;background:#6f6f6f"></div>
<div class="a" style="left:20px;top:423px;width:1124px;height:20px;background:#fff"></div>
<div class="a" style="left:20px;top:423px;width:35px;height:20px;background:#c9d9e8"></div>
<div class="c" style="left:20px;top:423px;width:35px;color:#000;text-align:right;padding-left:0;padding-right:3.5px;">2</div>
<svg class="a" style="left:78px;top:424px;overflow:visible" width="15" height="15"><use href="#chan"/></svg>
<div class="c" style="left:115px;top:423px;width:172px;color:#000;padding-left:2.5px;">Customer Feedback</div>
<div class="c" style="left:291px;top:423px;width:104px;color:#000;padding-left:2.5px;">standard</div>
<div class="c" style="left:398px;top:423px;width:229px;color:#000;padding-left:2.5px;">General</div>
<div class="c" style="left:630px;top:423px;width:173px;color:#000;padding-left:2.5px;">Customer feedback</div>
<div class="c" style="left:806px;top:423px;width:148px;color:#000;padding-left:2.5px;">Customerfeedback@M365x393550.onmicrosoft.com</div>
<div class="a" style="left:958px;top:423px;width:138px;height:19px;background:#d4d4d4"></div>
<svg class="a" style="left:1097px;top:425px" width="17" height="15"><use href="#open"/></svg>
<div class="c" style="left:1116px;top:423px;width:26px;color:#000;padding-left:0">Open</div>
<div class="a" style="left:20px;top:442px;width:1124px;height:1px;background:#ececec"></div>
<div class="a" style="left:75px;top:423px;width:1px;height:19px;background:#efefef"></div>
<div class="a" style="left:95px;top:423px;width:1px;height:19px;background:#efefef"></div>
<div class="a" style="left:115px;top:423px;width:1px;height:19px;background:#efefef"></div>
<div class="a" style="left:398px;top:423px;width:1px;height:19px;background:#efefef"></div>
<div class="a" style="left:630px;top:423px;width:1px;height:19px;background:#efefef"></div>
<div class="a" style="left:806px;top:423px;width:1px;height:19px;background:#efefef"></div>
<div class="a" style="left:957px;top:423px;width:1px;height:19px;background:#efefef"></div>
<div class="a" style="left:1096px;top:423px;width:1px;height:19px;background:#efefef"></div>
<div class="a" style="left:0;top:443px;width:1144px;height:20px;background:#ffffff"></div>
<div class="a" style="left:291px;top:443px;width:853px;height:20px;background:#d4d4d4"></div>
<div class="a" style="left:0;top:443px;width:55px;height:20px;background:#90aac6"></div>
<div class="a" style="left:5px;top:445px;width:16px;height:16px;background:#2b3a50;border:1px solid #fff"></div>
<div class="a" style="left:8px;top:452px;width:10px;height:2.4px;background:#fff"></div>
<div class="c" style="left:20px;top:443px;width:35px;color:#000;font-weight:bold;letter-spacing:-0.33px;text-align:right;padding-left:0;padding-right:3.5px;">1</div>
<svg class="a" style="left:78px;top:445px" width="15" height="13" style="overflow:visible"><use href="#team"/></svg>
<div class="c" style="left:115px;top:443px;width:172px;color:#000;font-weight:bold;letter-spacing:-0.33px;padding-left:2.5px;">Q2 team Allan</div>
<div class="a" style="left:0;top:442px;width:1144px;height:1px;background:#6f6f6f"></div>
<div class="a" style="left:0;top:462px;width:1144px;height:1px;background:#6f6f6f"></div>
<div class="a" style="left:20px;top:463px;width:1124px;height:20px;background:#fff"></div>
<div class="a" style="left:20px;top:463px;width:35px;height:20px;background:#c9d9e8"></div>
<div class="c" style="left:20px;top:463px;width:35px;color:#000;text-align:right;padding-left:0;padding-right:3.5px;">2</div>
<svg class="a" style="left:78px;top:464px;overflow:visible" width="15" height="15"><use href="#chan"/></svg>
<div class="c" style="left:115px;top:463px;width:172px;color:#000;padding-left:2.5px;">Q2 team Allan</div>
<div class="c" style="left:291px;top:463px;width:104px;color:#000;padding-left:2.5px;">standard</div>
<div class="c" style="left:398px;top:463px;width:229px;color:#000;padding-left:2.5px;">General</div>
<div class="c" style="left:630px;top:463px;width:173px;color:#000;padding-left:2.5px;">Q2 team Allan</div>
<div class="c" style="left:806px;top:463px;width:148px;color:#000;padding-left:2.5px;">Q2teamAllan@ovh.ytria.io</div>
<div class="a" style="left:958px;top:463px;width:138px;height:19px;background:#d4d4d4"></div>
<svg class="a" style="left:1097px;top:465px" width="17" height="15"><use href="#open"/></svg>
<div class="c" style="left:1116px;top:463px;width:26px;color:#000;padding-left:0">Open</div>
<div class="a" style="left:20px;top:482px;width:1124px;height:1px;background:#ececec"></div>
<div class="a" style="left:75px;top:463px;width:1px;height:19px;background:#efefef"></div>
<div class="a" style="left:95px;top:463px;width:1px;height:19px;background:#efefef"></div>
<div class="a" style="left:115px;top:463px;width:1px;height:19px;background:#efefef"></div>
<div class="a" style="left:398px;top:463px;width:1px;height:19px;background:#efefef"></div>
<div class="a" style="left:630px;top:463px;width:1px;height:19px;background:#efefef"></div>
<div class="a" style="left:806px;top:463px;width:1px;height:19px;background:#efefef"></div>
<div class="a" style="left:957px;top:463px;width:1px;height:19px;background:#efefef"></div>
<div class="a" style="left:1096px;top:463px;width:1px;height:19px;background:#efefef"></div>
<div class="a" style="left:0;top:483px;width:1144px;height:20px;background:#ffffff"></div>
<div class="a" style="left:291px;top:483px;width:853px;height:20px;background:#d4d4d4"></div>
<div class="a" style="left:0;top:483px;width:55px;height:20px;background:#90aac6"></div>
<div class="a" style="left:5px;top:485px;width:16px;height:16px;background:#2b3a50;border:1px solid #fff"></div>
<div class="a" style="left:8px;top:492px;width:10px;height:2.4px;background:#fff"></div>
<div class="c" style="left:20px;top:483px;width:35px;color:#000;font-weight:bold;letter-spacing:-0.33px;text-align:right;padding-left:0;padding-right:3.5px;">1</div>
<svg class="a" style="left:78px;top:485px" width="15" height="13" style="overflow:visible"><use href="#team"/></svg>
<div class="c" style="left:115px;top:483px;width:172px;color:#000;font-weight:bold;letter-spacing:-0.33px;padding-left:2.5px;">Commercial Lending</div>
<div class="a" style="left:0;top:482px;width:1144px;height:1px;background:#6f6f6f"></div>
<div class="a" style="left:0;top:502px;width:1144px;height:1px;background:#6f6f6f"></div>
<div class="a" style="left:20px;top:503px;width:1124px;height:20px;background:#fff"></div>
<div class="a" style="left:20px;top:503px;width:35px;height:20px;background:#c9d9e8"></div>
<div class="c" style="left:20px;top:503px;width:35px;color:#000;text-align:right;padding-left:0;padding-right:3.5px;">2</div>
<svg class="a" style="left:78px;top:504px;overflow:visible" width="15" height="15"><use href="#chan"/></svg>
<div class="c" style="left:115px;top:503px;width:172px;color:#000;padding-left:2.5px;">Commercial Lending</div>
<div class="c" style="left:291px;top:503px;width:104px;color:#000;padding-left:2.5px;">standard</div>
<div class="c" style="left:398px;top:503px;width:229px;color:#000;padding-left:2.5px;">General</div>
<div class="c" style="left:630px;top:503px;width:173px;color:#000;padding-left:2.5px;">A collaboration area for the Commercial Lending team</div>
<div class="c" style="left:806px;top:503px;width:148px;color:#000;padding-left:2.5px;">CommercialLending@M365x393550.onmicrosoft.com</div>
<div class="a" style="left:958px;top:503px;width:138px;height:19px;background:#d4d4d4"></div>
<svg class="a" style="left:1097px;top:505px" width="17" height="15"><use href="#open"/></svg>
<div class="c" style="left:1116px;top:503px;width:26px;color:#000;padding-left:0">Open</div>
<div class="a" style="left:20px;top:522px;width:1124px;height:1px;background:#ececec"></div>
<div class="a" style="left:75px;top:503px;width:1px;height:19px;background:#efefef"></div>
<div class="a" style="left:95px;top:503px;width:1px;height:19px;background:#efefef"></div>
<div class="a" style="left:115px;top:503px;width:1px;height:19px;background:#efefef"></div>
<div class="a" style="left:398px;top:503px;width:1px;height:19px;background:#efefef"></div>
<div class="a" style="left:630px;top:503px;width:1px;height:19px;background:#efefef"></div>
<div class="a" style="left:806px;top:503px;width:1px;height:19px;background:#efefef"></div>
<div class="a" style="left:957px;top:503px;width:1px;height:19px;background:#efefef"></div>
<div class="a" style="left:1096px;top:503px;width:1px;height:19px;background:#efefef"></div>
<div class="a" style="left:0;top:523px;width:1144px;height:20px;background:#ffffff"></div>
<div class="a" style="left:291px;top:523px;width:853px;height:20px;background:#d4d4d4"></div>
<div class="a" style="left:0;top:523px;width:55px;height:20px;background:#90aac6"></div>
<div class="a" style="left:5px;top:525px;width:16px;height:16px;background:#2b3a50;border:1px solid #fff"></div>
<div class="a" style="left:8px;top:532px;width:10px;height:2.4px;background:#fff"></div>
<div class="c" style="left:20px;top:523px;width:35px;color:#000;font-weight:bold;letter-spacing:-0.33px;text-align:right;padding-left:0;padding-right:3.5px;">1</div>
<svg class="a" style="left:78px;top:525px" width="15" height="13" style="overflow:visible"><use href="#team"/></svg>
<div class="c" style="left:115px;top:523px;width:172px;color:#000;font-weight:bold;letter-spacing:-0.33px;padding-left:2.5px;">My org team Allan</div>
<div class="a" style="left:0;top:522px;width:1144px;height:1px;background:#6f6f6f"></div>
<div class="a" style="left:0;top:542px;width:1144px;height:1px;background:#6f6f6f"></div>
<div class="a" style="left:20px;top:543px;width:1124px;height:20px;background:#fff"></div>
<div class="a" style="left:20px;top:543px;width:35px;height:20px;background:#c9d9e8"></div>
<div class="c" style="left:20px;top:543px;width:35px;color:#000;text-align:right;padding-left:0;padding-right:3.5px;">2</div>
<svg class="a" style="left:78px;top:544px;overflow:visible" width="15" height="15"><use href="#chan"/></svg>
<div class="c" style="left:115px;top:543px;width:172px;color:#000;padding-left:2.5px;">My org team Allan</div>
<div class="c" style="left:291px;top:543px;width:104px;color:#000;padding-left:2.5px;">standard</div>
<div class="c" style="left:398px;top:543px;width:229px;color:#000;padding-left:2.5px;">Reviews</div>
<div class="a" style="left:631px;top:543px;width:175px;height:19px;background:#d4d4d4"></div>
<div class="a" style="left:807px;top:543px;width:150px;height:19px;background:#d4d4d4"></div>
<div class="a" style="left:958px;top:543px;width:138px;height:19px;background:#d4d4d4"></div>
<svg class="a" style="left:1097px;top:545px" width="17" height="15"><use href="#open"/></svg>
<div class="c" style="left:1116px;top:543px;width:26px;color:#000;padding-left:0">Open</div>
<div class="a" style="left:20px;top:562px;width:1124px;height:1px;background:#ececec"></div>
<div class="a" style="left:75px;top:543px;width:1px;height:19px;background:#efefef"></div>
<div class="a" style="left:95px;top:543px;width:1px;height:19px;background:#efefef"></div>
<div class="a" style="left:115px;top:543px;width:1px;height:19px;background:#efefef"></div>
<div class="a" style="left:398px;top:543px;width:1px;height:19px;background:#efefef"></div>
<div class="a" style="left:630px;top:543px;width:1px;height:19px;background:#efefef"></div>
<div class="a" style="left:806px;top:543px;width:1px;height:19px;background:#efefef"></div>
<div class="a" style="left:957px;top:543px;width:1px;height:19px;background:#efefef"></div>
<div class="a" style="left:1096px;top:543px;width:1px;height:19px;background:#efefef"></div>
<div class="a" style="left:20px;top:563px;width:1124px;height:20px;background:#fff"></div>
<div class="a" style="left:20px;top:563px;width:35px;height:20px;background:#c9d9e8"></div>
<div class="c" style="left:20px;top:563px;width:35px;color:#000;text-align:right;padding-left:0;padding-right:3.5px;">2</div>
<svg class="a" style="left:78px;top:564px;overflow:visible" width="15" height="15"><use href="#chan"/></svg>
<div class="c" style="left:115px;top:563px;width:172px;color:#000;padding-left:2.5px;">My org team Allan</div>
<div class="c" style="left:291px;top:563px;width:104px;color:#000;padding-left:2.5px;">standard</div>
<div class="c" style="left:398px;top:563px;width:229px;color:#000;padding-left:2.5px;">General</div>
<div class="c" style="left:630px;top:563px;width:173px;color:#000;padding-left:2.5px;">Check here for organization announcements</div>
<div class="c" style="left:806px;top:563px;width:148px;color:#000;padding-left:2.5px;">MyorgteamAllan@ovh.ytria.io</div>
<div class="a" style="left:958px;top:563px;width:138px;height:19px;background:#d4d4d4"></div>
<svg class="a" style="left:1097px;top:565px" width="17" height="15"><use href="#open"/></svg>
<div class="c" style="left:1116px;top:563px;width:26px;color:#000;padding-left:0">Open</div>
<div class="a" style="left:20px;top:582px;width:1124px;height:1px;background:#ececec"></div>
<div class="a" style="left:75px;top:563px;width:1px;height:19px;background:#efefef"></div>
<div class="a" style="left:95px;top:563px;width:1px;height:19px;background:#efefef"></div>
<div class="a" style="left:115px;top:563px;width:1px;height:19px;background:#efefef"></div>
<div class="a" style="left:398px;top:563px;width:1px;height:19px;background:#efefef"></div>
<div class="a" style="left:630px;top:563px;width:1px;height:19px;background:#efefef"></div>
<div class="a" style="left:806px;top:563px;width:1px;height:19px;background:#efefef"></div>
<div class="a" style="left:957px;top:563px;width:1px;height:19px;background:#efefef"></div>
<div class="a" style="left:1096px;top:563px;width:1px;height:19px;background:#efefef"></div>
<div class="a" style="left:290px;top:0;width:1px;height:580px;background:#3b4656"></div>
</div></body></html>
